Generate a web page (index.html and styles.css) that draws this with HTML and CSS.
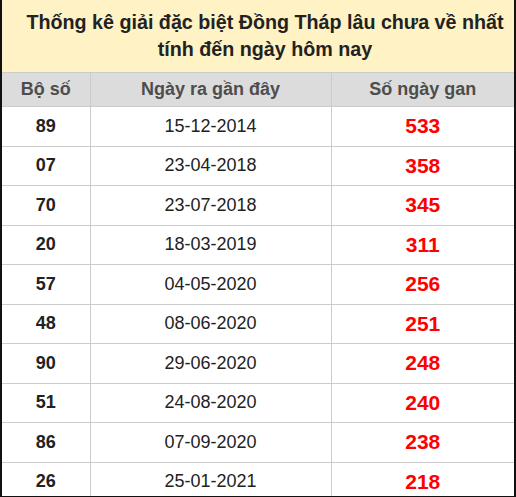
FILE: index.html
```html
<!DOCTYPE html>
<html>
<head>
<meta charset="utf-8">
<link rel="stylesheet" href="styles.css">
</head>
<body>
<div class="frame">
<table class="gan">
  <colgroup><col class="c1"><col class="c2"><col class="c3"></colgroup>
  <thead>
    <tr><th colspan="3" class="title">Thống kê giải đặc biệt Đồng Tháp lâu chưa về nhất<br>tính đến ngày hôm nay</th></tr>
    <tr class="head"><th>Bộ số</th><th>Ngày ra gần đây</th><th>Số ngày gan</th></tr>
  </thead>
  <tbody>
    <tr><td class="num">89</td><td class="date">15-12-2014</td><td class="days">533</td></tr>
    <tr><td class="num">07</td><td class="date">23-04-2018</td><td class="days">358</td></tr>
    <tr><td class="num">70</td><td class="date">23-07-2018</td><td class="days">345</td></tr>
    <tr><td class="num">20</td><td class="date">18-03-2019</td><td class="days">311</td></tr>
    <tr><td class="num">57</td><td class="date">04-05-2020</td><td class="days">256</td></tr>
    <tr><td class="num">48</td><td class="date">08-06-2020</td><td class="days">251</td></tr>
    <tr><td class="num">90</td><td class="date">29-06-2020</td><td class="days">248</td></tr>
    <tr><td class="num">51</td><td class="date">24-08-2020</td><td class="days">240</td></tr>
    <tr><td class="num">86</td><td class="date">07-09-2020</td><td class="days">238</td></tr>
    <tr><td class="num">26</td><td class="date">25-01-2021</td><td class="days">218</td></tr>
  </tbody>
</table>
</div>
</body>
</html>
```
FILE: styles.css
```css
html, body { margin: 0; padding: 0; background: #fff; }
body { font-family: "Liberation Sans", Arial, sans-serif; color: #222; }
.frame {
  width: 516px;
  height: 497px;
  box-sizing: border-box;
  border-left: 2px solid #111;
  border-right: 2px solid #111;
  border-bottom: 1px solid #111;
  overflow: hidden;
}
.gan {
  width: 100%;
  border-collapse: collapse;
  table-layout: fixed;
}
.c1 { width: 88px; }
.c2 { width: 241px; }
.c3 { width: auto; }
.gan th, .gan td {
  border: 1px solid #ccc;
  text-align: center;
  padding: 0;
}
.gan tr > :first-child { border-left: none; }
.gan tr > :last-child { border-right: none; }
.title {
  background: #fff2c4;
  font-size: 19.7px;
  font-weight: bold;
  color: #222;
  line-height: 27px;
  height: 72px;
  padding-left: 14px !important;
  border-top: none !important;
}
.head th {
  background: #dcdcdc;
  color: #4d4d4d;
  font-size: 18px;
  font-weight: bold;
  height: 33px;
}
.gan td { height: 38.5px; }
.num { font-weight: bold; font-size: 18px; color: #222; }
.date { font-size: 18px; color: #222; }
.days { font-weight: bold; font-size: 21px; color: #ff0000; }
```
